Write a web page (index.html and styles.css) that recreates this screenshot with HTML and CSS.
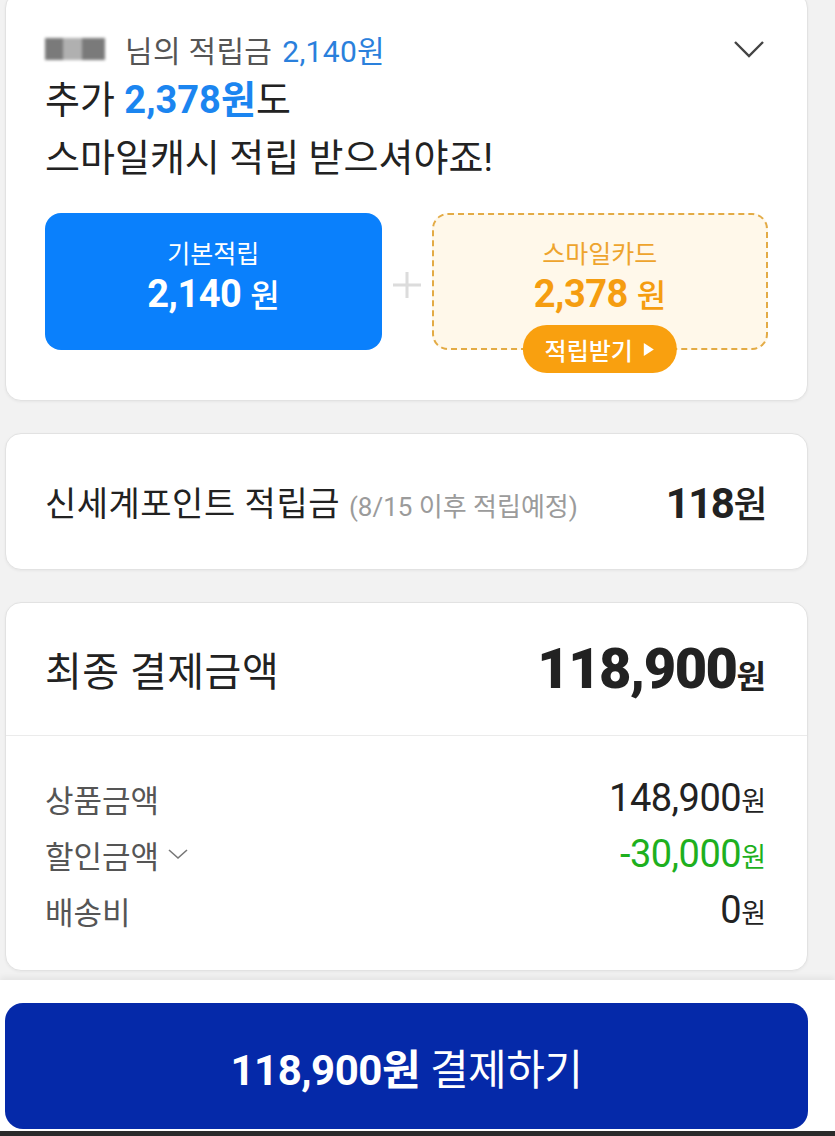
FILE: index.html
```html
<!DOCTYPE html>
<html lang="ko">

<head>
    <meta charset="UTF-8">
    <meta name="viewport" content="width=device-width, initial-scale=1.0">
    <title>주문결제</title>
    <link rel="stylesheet" href="styles.css">
</head>

<body>
<div class="page">
    <section class="card reward">
        <div class="reward-head">
            <p class="reward-sum">
                <span class="masked-name"></span>
                <span class="sum-label">님의 적립금</span>
                <span class="sum-value">2,140원</span>
            </p>
            <svg class="chevron" width="32" height="20" viewBox="0 0 32 20">
                <polyline points="2,3 16,17 30,3" fill="none" stroke="#444" stroke-width="2.4" />
            </svg>
        </div>
        <h2 class="reward-title">추가 <strong>2,378원</strong>도<br>스마일캐시 적립 받으셔야죠!</h2>
        <div class="reward-boxes">
            <div class="box box-basic">
                <span class="box-label">기본적립</span>
                <span class="box-amount">2,140 <small>원</small></span>
            </div>
            <div class="plus">
                <svg width="30" height="28" viewBox="0 0 30 28">
                    <path d="M15 1 V27 M1 14 H29" stroke="#dcdcdc" stroke-width="3" />
                </svg>
            </div>
            <div class="box box-card">
                <span class="box-label">스마일카드</span>
                <span class="box-amount">2,378 <small>원</small></span>
                <button class="pill" type="button">적립받기
                    <svg width="12" height="15" viewBox="0 0 12 15"><path d="M1 1 L11 7.5 L1 14 Z" fill="#fff" /></svg>
                </button>
            </div>
        </div>
    </section>

    <section class="card point">
        <p class="point-label">신세계포인트 적립금 <span class="point-note">(8/15 이후 적립예정)</span></p>
        <p class="point-value">118<small>원</small></p>
    </section>

    <section class="card total">
        <div class="total-head">
            <p class="total-label">최종 결제금액</p>
            <p class="total-value">118,900<small>원</small></p>
        </div>
        <div class="total-list">
            <div class="row">
                <span class="row-label">상품금액</span>
                <span class="row-value">148,900<small>원</small></span>
            </div>
            <div class="row">
                <span class="row-label">할인금액
                    <svg width="22" height="14" viewBox="0 0 22 14"><polyline points="2,3 11,11 20,3" fill="none" stroke="#777" stroke-width="1.6" /></svg>
                </span>
                <span class="row-value discount">-30,000<small>원</small></span>
            </div>
            <div class="row">
                <span class="row-label">배송비</span>
                <span class="row-value">0<small>원</small></span>
            </div>
        </div>
    </section>
</div>

<div class="pay-bar">
    <button class="pay-btn" type="button"><strong>118,900원</strong> 결제하기</button>
</div>
<div class="screen-edge"></div>
</body>

</html>
```

FILE: styles.css
```css
body {
    margin: 0;
    background: #f2f2f2;
    font-family: Roboto, "Noto Sans CJK KR", sans-serif;
    color: #222;
}

p,
h2 {
    margin: 0;
}

.page {
    display: flex;
    flex-direction: column;
    gap: 32px;
    padding: 0 27px 9px 5px;
}

.card {
    background: #fff;
    border: 1px solid #e2e2e2;
    border-radius: 16px;
    box-shadow: 0 1px 3px rgba(0, 0, 0, 0.05);
}

/* 스마일캐시 적립 카드 */
.reward {
    margin-top: -8px;
    padding: 38px 39px 50px;
}

.reward-head {
    display: flex;
    align-items: center;
    justify-content: space-between;
    height: 36px;
}

.reward-sum {
    display: flex;
    align-items: center;
    font-size: 30px;
    letter-spacing: 0.3px;
}

.masked-name {
    display: inline-block;
    width: 60px;
    height: 22px;
    margin-right: 20px;
    background: linear-gradient(90deg, #7a7a7a 0 30%, #b0b0b0 30% 62%, #7a7a7a 62% 100%);
    filter: blur(1.5px);
}

.sum-label {
    color: #555;
    margin-right: 10px;
}

.sum-value {
    color: #2a80dc;
}

.chevron {
    margin-right: 3px;
}

.reward-title {
    margin-top: 4px;
    font-size: 38px;
    font-weight: 400;
    line-height: 58px;
    letter-spacing: 0;
}

.reward-title strong {
    color: #1b85f0;
    font-weight: 700;
}

.reward-boxes {
    display: grid;
    grid-template-columns: 1fr 50px 1fr;
    margin-top: 26px;
    height: 137px;
}

.box {
    position: relative;
    display: flex;
    flex-direction: column;
    align-items: center;
    padding-top: 26px;
    border-radius: 16px;
    box-sizing: border-box;
}

.box-label {
    font-size: 25px;
    line-height: 32px;
}

.box-amount {
    margin-top: 2px;
    font-size: 38px;
    font-weight: 700;
    line-height: 42px;
    letter-spacing: -0.5px;
}

.box-amount small {
    font-size: 32px;
    font-weight: 500;
}

.box-basic {
    background: #0a80fc;
    color: #fff;
}

.plus {
    display: flex;
    justify-content: center;
    padding-top: 58px;
}

.box-card {
    background: #fff8ea;
    border: 2px dashed #e3ab45;
    padding-top: 24px;
}

.box-card .box-label {
    color: #eea42d;
}

.box-card .box-amount {
    color: #f59d10;
}

.pill {
    position: absolute;
    left: 50%;
    bottom: -25px;
    transform: translateX(-50%);
    display: flex;
    align-items: center;
    gap: 10px;
    height: 48px;
    padding: 0 22px;
    border: none;
    border-radius: 24px;
    background: #f9a00f;
    color: #fff;
    font-family: "Noto Sans CJK KR", sans-serif;
    font-size: 24px;
    font-weight: 500;
    white-space: nowrap;
}

/* 신세계포인트 */
.point {
    display: flex;
    align-items: center;
    justify-content: space-between;
    height: 135px;
    padding: 0 41px 0 39px;
}

.point-label {
    font-size: 34px;
    letter-spacing: 0.5px;
}

.point-note {
    font-size: 26px;
    letter-spacing: 0;
    color: #9b9b9b;
}

.point-value {
    font-size: 42px;
    font-weight: 700;
    letter-spacing: -1.5px;
}

.point-value small {
    font-size: 37px;
    font-weight: 500;
}

/* 최종 결제금액 */
.total-head {
    display: flex;
    align-items: center;
    justify-content: space-between;
    height: 132px;
    padding: 0 41px 0 39px;
    border-bottom: 1px solid #ebebeb;
}

.total-label {
    font-size: 40px;
    letter-spacing: 0.5px;
}

.total-value {
    font-size: 56px;
    font-weight: 900;
    letter-spacing: -1.5px;
}

.total-value small {
    font-size: 32px;
    font-weight: 700;
    letter-spacing: 0;
}

.total-list {
    padding: 34px 41px 32px 39px;
}

.row {
    display: flex;
    align-items: center;
    justify-content: space-between;
    height: 56px;
}

.row-label {
    display: flex;
    align-items: center;
    gap: 8px;
    font-size: 31px;
    color: #555;
}

.row-value {
    font-size: 38px;
    letter-spacing: -0.5px;
    color: #222;
}

.row-value small {
    font-size: 27px;
    letter-spacing: 0;
}

.row-value.discount {
    color: #1eb01e;
}

/* 하단 결제 버튼 */
.pay-bar {
    background: #fff;
    padding: 23px 27px 2px 5px;
    box-shadow: 0 -3px 6px rgba(0, 0, 0, 0.06);
}

.pay-btn {
    display: block;
    width: 100%;
    height: 126px;
    border: none;
    border-radius: 18px;
    background: #0529a9;
    color: #fff;
    font-family: Roboto, "Noto Sans CJK KR", sans-serif;
    font-size: 42px;
    letter-spacing: -0.5px;
}

.pay-btn strong {
    font-weight: 700;
}

.screen-edge {
    height: 5px;
    background: #2b2b2b;
}
```
